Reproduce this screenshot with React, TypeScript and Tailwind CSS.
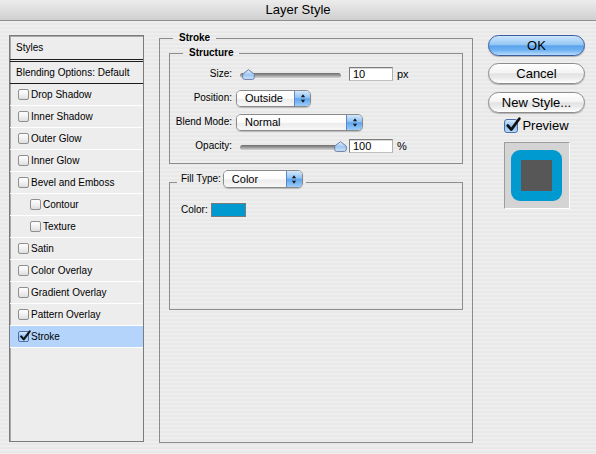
import React from 'react';

// checkbox in the styles list / preview
function CheckBox({ checked, big }: { checked?: boolean; big?: boolean }) {
  return (
    <span
      className={`relative inline-block shrink-0 border ${
        big ? 'h-[14px] w-[14px] rounded-[3px]' : 'h-[11px] w-[11px] rounded-[2px]'
      } ${
        checked
          ? 'border-[#4a6ea8] bg-[linear-gradient(to_bottom,#d6e8fb_0%,#8fc0f0_50%,#b9d9fa_100%)]'
          : 'border-[#8f8f8f] bg-[linear-gradient(to_bottom,#ffffff_0%,#f1f1f1_50%,#dedede_100%)]'
      }`}
    >
      {checked && (
        <svg
          viewBox="0 0 14 14"
          className={`absolute ${big ? '-top-[3px] left-[0px] h-[16px] w-[16px]' : '-top-[2px] left-[0px] h-[12px] w-[12px]'}`}
        >
          <path d="M2.5 7.5 L5.5 11 L12.5 1.5" fill="none" stroke="#111" strokeWidth="2.4" strokeLinecap="round" strokeLinejoin="round" />
        </svg>
      )}
    </span>
  );
}

function StyleRow({ label, indent, checked, active }: { label: string; indent?: boolean; checked?: boolean; active?: boolean }) {
  return (
    <div
      className={`flex h-[22px] items-center gap-[2px] border-b border-white ${indent ? 'pl-[20px]' : 'pl-[8px]'} ${
        active ? 'bg-[#b4d4fb]' : ''
      }`}
    >
      <CheckBox checked={checked} />
      <span>{label}</span>
    </div>
  );
}

function Arrows() {
  return (
    <svg viewBox="0 0 7 12" className="h-[11px] w-[6px]">
      <path d="M3.5 1 L6 4.5 H1 Z" fill="#1a1a1a" />
      <path d="M3.5 11 L6 7.5 H1 Z" fill="#1a1a1a" />
    </svg>
  );
}

function Popup({ value, className }: { value: string; className: string }) {
  return (
    <div
      className={`flex items-stretch overflow-hidden rounded-[5px] border border-[#8a8a8a] shadow-[0_1px_1px_rgba(0,0,0,0.2)] ${className}`}
    >
      <div className="flex flex-1 items-center bg-[linear-gradient(to_bottom,#ffffff_0%,#fbfbfb_50%,#ececec_55%,#f7f7f7_100%)] pl-[8px] text-[11px]">
        {value}
      </div>
      <div className="flex w-[16px] items-center justify-center border-l border-[#5a86c4] bg-[linear-gradient(to_bottom,#d3e8fc_0%,#8fc2f4_45%,#5ea4ec_52%,#9ccdfa_100%)]">
        <Arrows />
      </div>
    </div>
  );
}

function Thumb() {
  return (
    <svg viewBox="0 0 13 11" className="h-[11px] w-[13px]">
      <defs>
        <linearGradient id="thumbFill" x1="0" y1="0" x2="0" y2="1">
          <stop offset="0" stopColor="#e4f0fd" />
          <stop offset="0.55" stopColor="#9cc7f1" />
          <stop offset="1" stopColor="#d2e6fb" />
        </linearGradient>
      </defs>
      <path d="M6.5 0.6 L12.3 5.2 V8.5 Q12.3 10.4 10.4 10.4 H2.6 Q0.7 10.4 0.7 8.5 V5.2 Z" fill="url(#thumbFill)" stroke="#6b7ea6" strokeWidth="1" />
    </svg>
  );
}

function Slider({ thumbClass }: { thumbClass: string }) {
  return (
    <div className="relative ml-[8px] h-[11px] w-[101px]">
      <div className="absolute left-0 right-0 top-[4px] h-[5px] rounded-full bg-[linear-gradient(to_bottom,#6d6d6d_0%,#9d9d9d_50%,#d6d6d6_100%)]" />
      <div className={`absolute top-0 ${thumbClass}`}>
        <Thumb />
      </div>
    </div>
  );
}

function NumField({ value, unit }: { value: string; unit: string }) {
  return (
    <>
      <div className="ml-[8px] flex h-[14px] w-[44px] items-center border border-[#7c7c7c] border-b-[#c0c0c0] border-r-[#b0b0b0] bg-white pl-[3px] text-[11px] shadow-[inset_0_1px_0_#d9d9d9]">
        {value}
      </div>
      <span className="ml-[4px] text-[11px]">{unit}</span>
    </>
  );
}

function AquaButton({ label, primary }: { label: string; primary?: boolean }) {
  return (
    <div
      className={`flex h-[21px] w-[97px] items-center justify-center rounded-full border text-[13px] shadow-[0_1px_1px_rgba(0,0,0,0.25)] ${
        primary
          ? 'border-[#3b5c9e] bg-[linear-gradient(to_bottom,#cde5fc_0%,#95c7f5_45%,#5aa3ec_52%,#6fb2f2_75%,#b9dcfc_100%)]'
          : 'border-[#8c8c8c] bg-[linear-gradient(to_bottom,#ffffff_0%,#f4f4f4_45%,#e2e2e2_52%,#ececec_75%,#ffffff_100%)]'
      }`}
    >
      {label}
    </div>
  );
}

const styleItems = [
  { label: 'Drop Shadow' },
  { label: 'Inner Shadow' },
  { label: 'Outer Glow' },
  { label: 'Inner Glow' },
  { label: 'Bevel and Emboss' },
  { label: 'Contour', indent: true },
  { label: 'Texture', indent: true },
  { label: 'Satin' },
  { label: 'Color Overlay' },
  { label: 'Gradient Overlay' },
  { label: 'Pattern Overlay' },
];

export default function App() {
  return (
    <div className="h-[454px] w-[596px] overflow-hidden font-['Liberation_Sans',Arial,sans-serif] text-[10px] leading-[12px] text-black">
      {/* title bar */}
      <div className="flex h-[21px] items-center justify-center border-b border-[#8e8e8e] bg-[linear-gradient(to_bottom,#ececec_0%,#dedede_50%,#cfcfcf_100%)] text-[13px]">
        Layer Style
      </div>

      <div className="flex h-[433px] items-start bg-[image:repeating-linear-gradient(to_bottom,#eeeeee_0px,#eeeeee_2px,#e8e8e8_2px,#e8e8e8_4px)] pl-[9px]">
        {/* styles list */}
        <div className="mt-[14px] h-[407px] w-[135px] border border-[#7b7b7b] bg-[#ededed] shadow-[inset_1px_1px_0_#a9a9a9]">
          <div className="flex h-[23px] items-center pl-[6px]">Styles</div>
          <div className="h-[3px] border-y border-[#1c1c1c]" />
          <div className="flex h-[22px] items-center border-b border-[#1c1c1c] pl-[6px]">Blending Options: Default</div>
          {styleItems.map((s) => (
            <StyleRow key={s.label} label={s.label} indent={s.indent} />
          ))}
          <StyleRow label="Stroke" checked active />
        </div>

        {/* stroke settings */}
        <fieldset className="ml-[15px] mt-[11px] h-[411px] w-[314px] border border-[#8c8c8c] px-[9px]">
          <legend className="ml-[4px] px-[6px] font-bold">Stroke</legend>

          <fieldset className="mt-[3px] w-full border border-[#8c8c8c]">
            <legend className="ml-[13px] px-[6px] font-bold">Structure</legend>
            <div className="flex flex-col pb-[5px] pt-[3px]">
              <div className="flex h-[24px] items-center">
                <span className="w-[62px] text-right">Size:</span>
                <Slider thumbClass="left-[2px]" />
                <NumField value="10" unit="px" />
              </div>
              <div className="flex h-[24px] items-center">
                <span className="w-[62px] text-right">Position:</span>
                <Popup value="Outside" className="ml-[4px] h-[17px] w-[75px]" />
              </div>
              <div className="flex h-[24px] items-center">
                <span className="w-[62px] text-right">Blend Mode:</span>
                <Popup value="Normal" className="ml-[4px] h-[17px] w-[127px]" />
              </div>
              <div className="flex h-[24px] items-center">
                <span className="w-[62px] text-right">Opacity:</span>
                <Slider thumbClass="left-[94px]" />
                <NumField value="100" unit="%" />
              </div>
            </div>
          </fieldset>

          <fieldset className="mt-[6px] h-[140px] w-full border border-[#8c8c8c]">
            <legend className="ml-[7px] flex items-center gap-[2px] pb-[6px] pl-[4px] pr-[3px]">
              <span>Fill Type:</span>
              <Popup value="Color" className="h-[18px] w-[80px]" />
            </legend>
            <div className="flex items-center gap-[3px] pl-[11px] pt-[9px]">
              <span>Color:</span>
              <div className="h-[14px] w-[35px] border border-[#7a7a7a] bg-[#0099d0]" />
            </div>
          </fieldset>
        </fieldset>

        {/* buttons + preview */}
        <div className="ml-[15px] mt-[14px] flex w-[97px] flex-col items-center">
          <AquaButton label="OK" primary />
          <div className="mt-[7px]">
            <AquaButton label="Cancel" />
          </div>
          <div className="mt-[8px]">
            <AquaButton label="New Style..." />
          </div>
          <div className="mt-[6px] flex items-center gap-[4px] text-[13px] leading-[14px]">
            <CheckBox checked big />
            <span>Preview</span>
          </div>
          <div className="mt-[9px] flex h-[67px] w-[66px] items-center justify-center border border-[#9c9c9c] border-b-white border-r-white bg-[#d4d4d4]">
            <div className="rounded-[9px] bg-[#0099d0] p-[10px]">
              <div className="h-[31px] w-[31px] bg-[#575757]" />
            </div>
          </div>
        </div>
      </div>
    </div>
  );
}
